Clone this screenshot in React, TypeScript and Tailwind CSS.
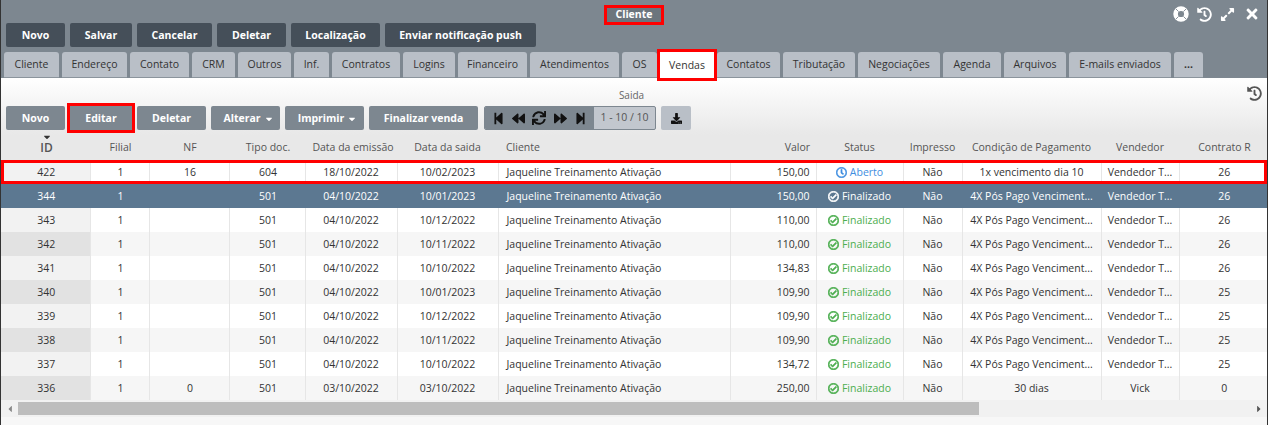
import { FaHistory, FaExpandAlt, FaTimes, FaStepBackward, FaBackward, FaSync, FaForward, FaStepForward, FaDownload, FaRegCheckCircle, FaRegClock, FaCaretDown, FaCaretLeft, FaCaretRight } from 'react-icons/fa';
import clsx from 'clsx';

const topActions = [
  { label: 'Novo', width: 'w-[59px]' },
  { label: 'Salvar', width: 'w-[62px]' },
  { label: 'Cancelar', width: 'w-[75px]' },
  { label: 'Deletar', width: 'w-[69px]' },
  { label: 'Localização', width: 'w-[89px]' },
  { label: 'Enviar notificação push', width: 'w-[151px]' },
];

const tabs = [
  { label: 'Cliente', width: 'w-[55px]' },
  { label: 'Endereço', width: 'w-[65px]' },
  { label: 'Contato', width: 'w-[59px]' },
  { label: 'CRM', width: 'w-[43px]' },
  { label: 'Outros', width: 'w-[53px]' },
  { label: 'Inf.', width: 'w-[35px]' },
  { label: 'Contratos', width: 'w-[68px]' },
  { label: 'Logins', width: 'w-[52px]' },
  { label: 'Financeiro', width: 'w-[69px]' },
  { label: 'Atendimentos', width: 'w-[89px]' },
  { label: 'OS', width: 'w-[35px]' },
  { label: 'Vendas', width: 'w-[54px]' },
  { label: 'Contatos', width: 'w-[63px]' },
  { label: 'Tributação', width: 'w-[72px]' },
  { label: 'Negociações', width: 'w-[82px]' },
  { label: 'Agenda', width: 'w-[58px]' },
  { label: 'Arquivos', width: 'w-[62px]' },
  { label: 'E-mails enviados', width: 'w-[102px]' },
  { label: '...', width: 'w-[29px]' },
];

const columns = [
  { label: 'ID', width: 89, head: 'pl-[2px]' },
  { label: 'Filial', width: 59, head: 'pl-[2px]' },
  { label: 'NF', width: 80, head: 'pl-[2px]' },
  { label: 'Tipo doc.', width: 76, head: 'pl-[2px]' },
  { label: 'Data da emissão', width: 92, head: 'pl-[4px]' },
  { label: 'Data da saida', width: 101, head: '' },
  { label: 'Cliente', width: 232, head: 'pl-[8px] text-left' },
  { label: 'Valor', width: 86, head: 'pr-[6px] text-right' },
  { label: 'Status', width: 87, head: '' },
  { label: 'Impresso', width: 59, head: '' },
  { label: 'Condição de Pagamento', width: 139, head: '' },
  { label: 'Vendedor', width: 78, head: '' },
  { label: 'Contrato R', width: 88, head: 'pl-[3px]' },
];

const P = '4X Pós Pago Venciment...';
const V = 'Vendedor T...';

const rows = [
  { id: 422, nf: '16', tipo: '604', em: '18/10/2022', sa: '10/02/2023', val: '150,00', st: 'Aberto', cond: '1x vencimento dia 10', vend: V, con: '26' },
  { id: 344, nf: '', tipo: '501', em: '04/10/2022', sa: '10/01/2023', val: '150,00', st: 'Finalizado', cond: P, vend: V, con: '26' },
  { id: 343, nf: '', tipo: '501', em: '04/10/2022', sa: '10/12/2022', val: '110,00', st: 'Finalizado', cond: P, vend: V, con: '26' },
  { id: 342, nf: '', tipo: '501', em: '04/10/2022', sa: '10/11/2022', val: '110,00', st: 'Finalizado', cond: P, vend: V, con: '26' },
  { id: 341, nf: '', tipo: '501', em: '04/10/2022', sa: '10/10/2022', val: '134,83', st: 'Finalizado', cond: P, vend: V, con: '26' },
  { id: 340, nf: '', tipo: '501', em: '04/10/2022', sa: '10/01/2023', val: '109,90', st: 'Finalizado', cond: P, vend: V, con: '25' },
  { id: 339, nf: '', tipo: '501', em: '04/10/2022', sa: '10/12/2022', val: '109,90', st: 'Finalizado', cond: P, vend: V, con: '25' },
  { id: 338, nf: '', tipo: '501', em: '04/10/2022', sa: '10/11/2022', val: '109,90', st: 'Finalizado', cond: P, vend: V, con: '25' },
  { id: 337, nf: '', tipo: '501', em: '04/10/2022', sa: '10/10/2022', val: '134,72', st: 'Finalizado', cond: P, vend: V, con: '25' },
  { id: 336, nf: '0', tipo: '501', em: '03/10/2022', sa: '03/10/2022', val: '250,00', st: 'Finalizado', cond: '30 dias', vend: 'Vick', con: '0' },
];

function LifeRing() {
  return (
    <svg viewBox="0 0 16 16" className="h-[16px] w-[16px]">
      <circle cx="8" cy="8" r="5.4" fill="none" stroke="#fff" strokeWidth="4.6" />
      <g stroke="#7d8790" strokeWidth="0.9">
        <path d="M3 3 L5.6 5.6" />
        <path d="M13 3 L10.4 5.6" />
        <path d="M3 13 L5.6 10.4" />
        <path d="M13 13 L10.4 10.4" />
      </g>
    </svg>
  );
}

function ToolButton({ label, caret, highlighted, width }: { label: string; caret?: boolean; highlighted?: boolean; width: string }) {
  return (
    <button className={clsx('flex h-[24px] items-center justify-center gap-[3px] bg-[#7d8790] pt-[1px] text-[10.5px] font-bold text-white', width, highlighted ? 'outline-[3px] outline-[#f00]' : 'rounded-[2px]', caret && 'pl-[6px]')}>
      {label}
      {caret && <FaCaretDown className="h-[10px] w-[10px]" />}
    </button>
  );
}

function StatusCell({ status, selected }: { status: string; selected: boolean }) {
  if (status === 'Aberto') {
    return (
      <span className="inline-flex items-center gap-[3px] align-middle text-[#3f8ee0]">
        <FaRegClock className="h-[11px] w-[11px] [stroke-width:24]" />
        Aberto
      </span>
    );
  }
  return (
    <span className={clsx('inline-flex items-center gap-[3px] align-middle', selected ? 'text-white' : 'text-[#4cae4f]')}>
      <FaRegCheckCircle className="h-[11px] w-[11px] [stroke-width:32]" />
      {status}
    </span>
  );
}

export default function App() {
  return (
    <div className="flex h-[425px] w-[1268px] flex-col overflow-hidden border-x border-[#333] bg-[#f7f7f7] font-['Open_Sans',sans-serif] text-[10.5px] text-[#333]">
      {/* Window header */}
      <div className="relative h-[78px] shrink-0 bg-[#7d8790] pl-[5px]">
        <div className="flex h-[23px] items-center justify-center pr-[5px] pt-[6px]">
          <span className="flex h-[14px] w-[54px] items-center justify-center bg-[#6c757d] text-[10.5px] font-bold text-white outline-[3px] outline-[#f00]">Cliente</span>
        </div>
        <div className="absolute right-[8px] top-[6px] flex items-center gap-[8px] text-white">
          <LifeRing />
          <FaHistory className="h-[15px] w-[15px]" />
          <FaExpandAlt className="h-[15px] w-[15px]" />
          <FaTimes className="ml-[2px] h-[16px] w-[14px]" />
        </div>
        <div className="flex gap-[5px]">
          {topActions.map((a) => (
            <button key={a.label} className={clsx('h-[24px] rounded-[2px] bg-[#454f59] pt-[1px] text-[10.5px] font-bold text-white', a.width)}>
              {a.label}
            </button>
          ))}
        </div>
        <div className="-ml-[2px] mt-[5px] flex h-[26px] gap-[3px]">
          {tabs.map((t) => (
            <div
              key={t.label}
              className={clsx(
                'flex items-center justify-center pt-[1px] text-[10.5px]',
                t.width,
                t.label === 'Vendas' ? 'bg-white outline-[3px] outline-[#f00]' : 'rounded-t-[3px] border-b border-[#8b949c] bg-[#b9bfc7]',
                t.label === '...' && 'font-bold',
              )}
            >
              {t.label}
            </div>
          ))}
        </div>
      </div>

      {/* Vendas panel */}
      <div className="flex flex-1 flex-col bg-gradient-to-b from-white to-[#e8e8e8] bg-[length:100%_57px] bg-no-repeat">
        <div className="grid h-[28px] grid-cols-[1fr_auto_1fr] items-center pr-[5px] pt-[6px] text-[10px] text-[#666]">
          <span />
          <span>Saida</span>
          <FaHistory className="h-[15px] w-[15px] -translate-y-[2px] justify-self-end text-[#555]" />
        </div>
        <div className="flex h-[24px] items-center gap-[5px] pl-[5px]">
          <ToolButton label="Novo" width="w-[59px]" />
          <ToolButton label="Editar" width="w-[62px]" highlighted />
          <ToolButton label="Deletar" width="w-[69px]" />
          <ToolButton label="Alterar" width="w-[69px]" caret />
          <ToolButton label="Imprimir" width="w-[79px]" caret />
          <ToolButton label="Finalizar venda" width="w-[109px]" />
          <div className="ml-[1px] flex h-[24px] w-[172px] items-center overflow-hidden rounded-[2px] border border-[#7d8790] bg-[#c2c7ce]">
            <div className="flex h-full w-[109px] shrink-0 items-center justify-around bg-[#7d8790] px-[3px] text-[#111]">
              <FaStepBackward className="h-[13px] w-[13px]" />
              <FaBackward className="h-[13px] w-[13px]" />
              <FaSync className="h-[14px] w-[14px]" />
              <FaForward className="h-[13px] w-[13px]" />
              <FaStepForward className="h-[13px] w-[13px]" />
            </div>
            <span className="flex-1 whitespace-nowrap text-center text-[#555]">1 - 10 / 10</span>
          </div>
          <button className="flex h-[24px] w-[30px] items-center justify-center rounded-[2px] bg-[#b9bfc7] text-[#111]">
            <FaDownload className="h-[11px] w-[11px]" />
          </button>
        </div>

        {/* Sales table */}
        <table className="mt-[5px] w-[1266px] table-fixed border-collapse">
          <colgroup>
            {columns.map((c) => (
              <col key={c.label} style={{ width: c.width }} />
            ))}
          </colgroup>
          <thead>
            <tr className="h-[25px] bg-[#e8e8e8]">
              {columns.map((c) => (
                <th key={c.label} className={clsx('relative p-0 text-center text-[10.5px] text-[#555]', c.label === 'ID' ? 'text-[12px] font-semibold text-[#444]' : 'font-normal', c.head)}>
                  {c.label}
                  {c.label === 'ID' && <FaCaretDown className="absolute left-[41px] top-[-3px] h-[10px] w-[10px] text-[#333]" />}
                </th>
              ))}
            </tr>
          </thead>
          <tbody>
            {rows.map((r, i) => {
              const selected = i === 1;
              const striped = i > 1 && i % 2 === 1;
              const cell = clsx('h-[24px] truncate border-r p-0 pt-[1px] text-center', selected ? 'border-[#5c7891]' : 'border-[#e6e6e6]');
              const nudged = clsx(cell, 'pl-[2px]');
              return (
                <tr key={r.id} className={clsx(selected ? 'bg-[#5c7891] text-white' : striped ? 'bg-[#f6f6f6]' : 'bg-white', i === 0 && 'outline-[3px] -outline-offset-[3px] outline-[#f00]')}>
                  <td className={clsx(nudged, !selected && (striped ? 'bg-[#e2e2e2]' : 'bg-[#f2f2f2]'))}>{r.id}</td>
                  <td className={nudged}>1</td>
                  <td className={nudged}>{r.nf}</td>
                  <td className={nudged}>{r.tipo}</td>
                  <td className={cell}>{r.em}</td>
                  <td className={cell}>{r.sa}</td>
                  <td className={clsx(cell, 'pl-[8px] text-left')}>Jaqueline Treinamento Ativação</td>
                  <td className={clsx(cell, 'pr-[6px] text-right')}>{r.val}</td>
                  <td className={cell}><StatusCell status={r.st} selected={selected} /></td>
                  <td className={cell}>Não</td>
                  <td className={cell}>{r.cond}</td>
                  <td className={cell}>{r.vend}</td>
                  <td className={clsx(nudged, 'border-r-0')}>{r.con}</td>
                </tr>
              );
            })}
          </tbody>
        </table>

        {/* Horizontal scrollbar */}
        <div className="flex h-[17px] items-center bg-[#f1f1f1] text-[#888]">
          <div className="flex w-[17px] justify-center"><FaCaretLeft className="h-[10px] w-[10px]" /></div>
          <div className="h-[13px] w-[961px] bg-[#bdbdbd]" />
          <div className="flex-1" />
          <div className="flex w-[17px] justify-center text-[#555]"><FaCaretRight className="h-[10px] w-[10px]" /></div>
        </div>
      </div>
    </div>
  );
}
